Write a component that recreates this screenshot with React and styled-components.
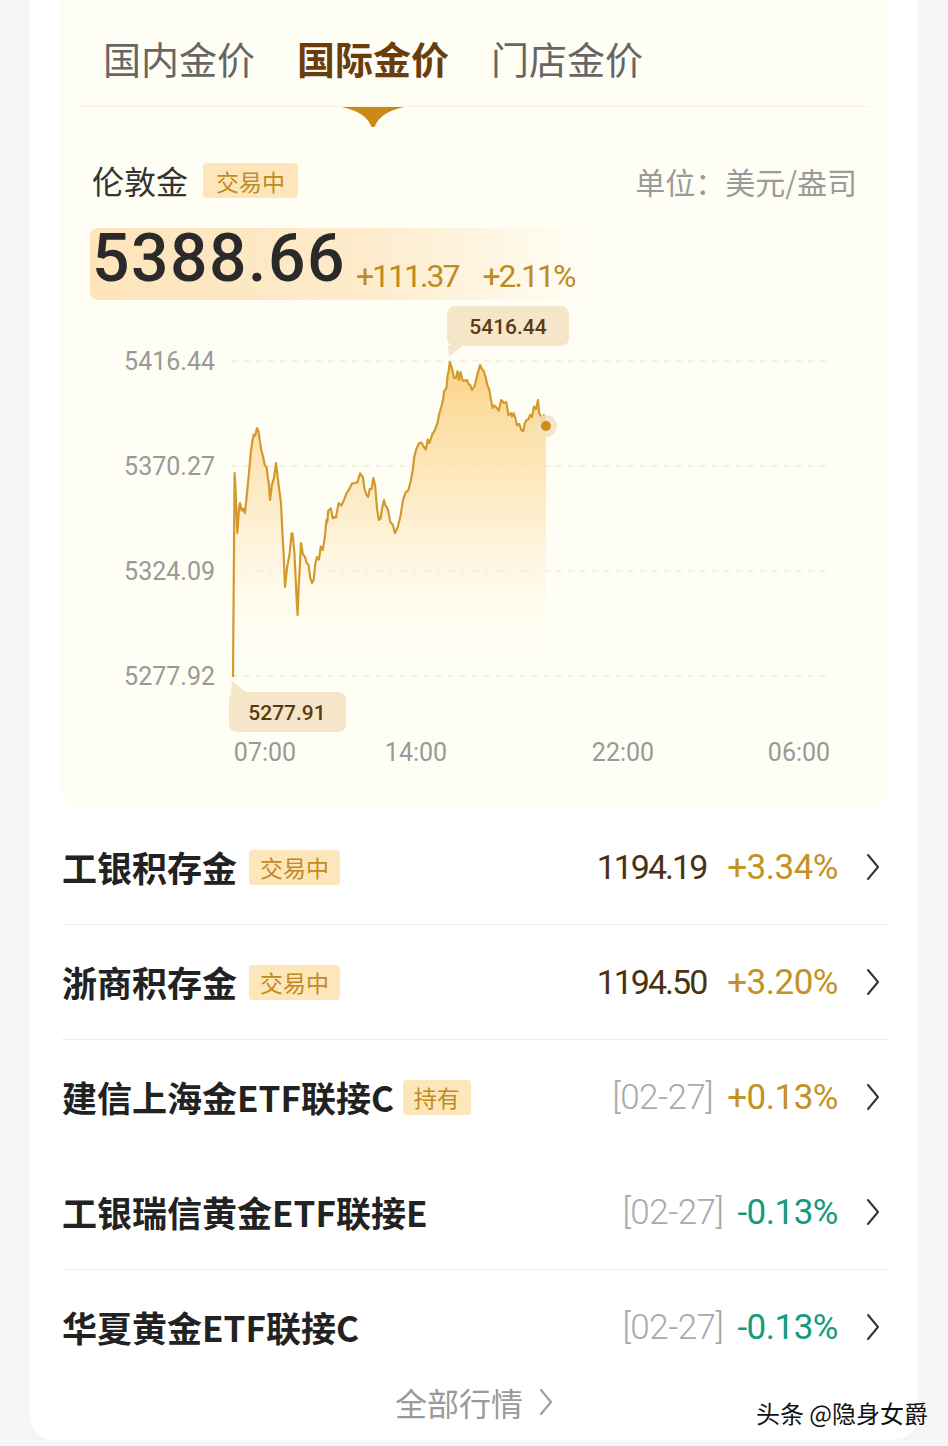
import React from 'react'
import styled, { createGlobalStyle } from 'styled-components'

const GlobalStyle = createGlobalStyle`
  html, body {
    margin: 0;
    padding: 0;
    background: #f5f5f5;
  }
  body {
    font-family: "Noto Sans CJK SC", "Noto Sans", sans-serif;
  }
`

const Page = styled.div`
  position: relative;
  width: 948px;
  height: 1446px;
  padding: 0 30px;
  box-sizing: border-box;
  background: #f5f5f5;
  overflow: hidden;
`

const Card = styled.div`
  height: 1440px;
  background: #ffffff;
  border-radius: 0 0 24px 24px;
  padding: 0 30px;
  box-sizing: border-box;
  display: flex;
  flex-direction: column;
`

const Panel = styled.div`
  height: 810px;
  background: #fffef4;
  border-radius: 0 0 24px 24px;
  display: flex;
  flex-direction: column;
  flex-shrink: 0;
`

const TabBar = styled.div`
  height: 107px;
  margin: 0 18px 0 20px;
  padding: 10px 0 0 23px;
  box-sizing: border-box;
  border-bottom: 1px solid #f7f1e1;
  display: flex;
  align-items: center;
  gap: 42px;
`

const Tab = styled.div`
  position: relative;
  font-size: 38px;
  line-height: 38px;
  color: ${p => (p.$active ? '#6a3d0c' : '#666666')};
  font-weight: ${p => (p.$active ? 700 : 400)};
`

const Indicator = styled.svg`
  position: absolute;
  left: 50%;
  top: calc(100% + 30px);
  transform: translateX(-50%);
`

const InfoRow = styled.div`
  margin-top: 56px;
  height: 35px;
  padding: 0 31px 0 32px;
  display: flex;
  align-items: center;
`

const Title = styled.div`
  font-size: 32px;
  line-height: 35px;
  color: #333333;
`

const Badge = styled.span`
  margin-left: ${p => p.$gap || 14}px;
  height: 35px;
  padding: 0 ${p => p.$pad || 11}px;
  border-radius: 4px;
  background: #fde6b9;
  color: #c18a22;
  font-size: 23px;
  font-weight: 400;
  display: inline-flex;
  align-items: center;
`

const Unit = styled.div`
  margin-left: auto;
  font-size: 30px;
  color: #9a9a9a;
`

const PriceBox = styled.div`
  margin: 30px 0 0 30px;
  width: 495px;
  height: 72px;
  padding-left: 2px;
  border-radius: 8px;
  background: linear-gradient(90deg, #fde4ba 0%, #fdebcc 55%, rgba(255, 250, 236, 0) 100%);
  display: flex;
  align-items: flex-end;
  font-family: Roboto, "Liberation Sans", sans-serif;
`

const BigPrice = styled.span`
  margin-bottom: 8px;
  font-size: 66px;
  line-height: 66px;
  font-weight: 500;
  letter-spacing: 1.5px;
  color: #2a2a2a;
`

const Delta = styled.span`
  margin: 0 0 8px ${p => p.$gap}px;
  font-size: 32px;
  line-height: 32px;
  letter-spacing: -2px;
  color: #c08b1f;
`

const ChartBox = styled.div`
  margin-top: 6px;
  height: 470px;
`

const List = styled.div`
  margin-left: 2px;
  display: flex;
  flex-direction: column;
`

const Row = styled.div`
  height: 115px;
  box-sizing: border-box;
  border-bottom: 1px solid ${p => (p.$divider ? '#eeeeee' : 'transparent')};
  display: flex;
  align-items: center;
`

const Name = styled.div`
  font-size: 35px;
  font-weight: 700;
  color: #222222;
  line-height: 40px;
`

const Right = styled.div`
  margin-left: auto;
  display: flex;
  align-items: center;
  font-family: Roboto, "Liberation Sans", sans-serif;
  font-size: 35px;
`

const Price = styled.span`
  font-size: 34px;
  letter-spacing: -2px;
  color: #4b3211;
`

const DateTag = styled.span`
  letter-spacing: -0.5px;
  color: #aaaaaa;
  font-weight: 300;
`

const Change = styled.span`
  margin-left: ${p => p.$gap}px;
  letter-spacing: -0.5px;
  color: ${p => (p.$down ? '#169a7c' : '#c39224')};
`

const ChevronSlot = styled.span`
  display: flex;
  margin: 0 8px 0 28px;
`

const More = styled.div`
  height: 34px;
  display: flex;
  justify-content: center;
  align-items: center;
  gap: 16px;
  font-size: 32px;
  color: #9a9a9a;
`

const Watermark = styled.div`
  position: absolute;
  right: 20px;
  bottom: 16px;
  font-size: 24px;
  color: #111111;
  text-shadow: 0 0 2px #fff, 0 0 2px #fff;
`

const keys = [
  [233, 677], [234.6, 473], [237.3, 533], [240, 503], [245, 513], [248, 483], [252, 443],
  [257, 428], [261.3, 450], [266.6, 467], [270, 500], [276, 463], [281, 503], [285, 587],
  [291.7, 533], [294.4, 553], [297.6, 615], [301, 543], [306.7, 563], [312, 583], [317, 557],
  [322.7, 550], [326.5, 520], [329, 510], [334.5, 517], [338.7, 503], [346.7, 493], [354.7, 483],
  [362.8, 477], [368, 497], [373.4, 478], [378.8, 520], [384, 500], [388, 510], [395, 533],
  [403, 500], [411, 480], [416, 450], [424, 447], [429.5, 443], [437.5, 423], [443, 400],
  [446.6, 387], [449.8, 362], [456, 378], [460.5, 372], [467, 380], [472, 390], [480, 365],
  [485.6, 377], [491, 400], [496, 407], [504, 403], [510.7, 413], [515, 417], [521.4, 430],
  [526.7, 420], [532, 417], [538, 400], [541.6, 427], [543.8, 415], [546, 425]
]

const buildPoints = () => {
  let seed = 11
  const rnd = () => {
    seed = (seed * 16807) % 2147483647
    return seed / 2147483647
  }
  const pts = [keys[0], keys[1]]
  for (let i = 1; i < keys.length - 1; i++) {
    const [x0, y0] = keys[i]
    const [x1, y1] = keys[i + 1]
    for (let s = 1; s <= 2; s++) {
      const t = s / 3
      const y = y0 + (y1 - y0) * t + (rnd() - 0.5) * 12
      pts.push([x0 + (x1 - x0) * t, Math.min(676, Math.max(364, y))])
    }
    pts.push(keys[i + 1])
  }
  return pts
}

const points = buildPoints()
const linePath = points.map(([x, y], i) => `${i ? 'L' : 'M'}${x.toFixed(1)},${y.toFixed(1)}`).join(' ')
const areaPath = `${linePath} L546,680 L233,680 Z`

const gridLines = [
  { y: 361, label: '5416.44' },
  { y: 466, label: '5370.27' },
  { y: 571, label: '5324.09' },
  { y: 676, label: '5277.92' }
]

const timeLabels = [
  { x: 265, label: '07:00' },
  { x: 416, label: '14:00' },
  { x: 623, label: '22:00' },
  { x: 799, label: '06:00' }
]

const Chart = () => (
  <svg width="828" height="470" viewBox="60 306 828 470">
    <defs>
      <linearGradient id="area" gradientUnits="userSpaceOnUse" x1="0" y1="380" x2="0" y2="650">
        <stop offset="0" stopColor="#fbcf7c" stopOpacity="0.85" />
        <stop offset="0.5" stopColor="#fde3b4" stopOpacity="0.6" />
        <stop offset="1" stopColor="#fff6e2" stopOpacity="0" />
      </linearGradient>
    </defs>
    {gridLines.map(g => (
      <g key={g.y}>
        <line x1="232" x2="830" y1={g.y} y2={g.y} stroke="#ece6d4" strokeWidth="1.2" strokeDasharray="6 6" />
        <text x="215" y={g.y + 9} textAnchor="end" fontFamily="Roboto, sans-serif" fontSize="25" fill="#999999">
          {g.label}
        </text>
      </g>
    ))}
    {timeLabels.map(t => (
      <text key={t.label} x={t.x} y="761" textAnchor="middle" fontFamily="Roboto, sans-serif" fontSize="25" fill="#999999">
        {t.label}
      </text>
    ))}
    <path d={areaPath} fill="url(#area)" />
    <path d={linePath} fill="none" stroke="#d29a2e" strokeWidth="2.2" strokeLinejoin="round" />
    <circle cx="546" cy="426" r="11" fill="#f1e2c2" opacity="0.85" />
    <circle cx="546" cy="426" r="5" fill="#cf8c17" />

    <polygon points="448,345 463,345 449,357" fill="#f6e6c9" />
    <rect x="447" y="306" width="122" height="40" rx="8" fill="#f6e6c9" />
    <text x="508" y="334" textAnchor="middle" fontFamily="Roboto, sans-serif" fontSize="21" fontWeight="500" fill="#5a3a10">
      5416.44
    </text>

    <polygon points="231,693 247,693 232,681" fill="#f6e6c9" />
    <rect x="229" y="692" width="117" height="40" rx="8" fill="#f6e6c9" />
    <text x="287" y="720" textAnchor="middle" fontFamily="Roboto, sans-serif" fontSize="21" fontWeight="500" fill="#5a3a10">
      5277.91
    </text>
  </svg>
)

const ChevronIcon = ({ color = '#333333' }) => (
  <svg width="14" height="28" viewBox="0 0 14 28">
    <polyline points="2,2 12,14 2,26" fill="none" stroke={color} strokeWidth="2" strokeLinecap="round" strokeLinejoin="round" />
  </svg>
)

const rows = [
  { name: '工银积存金', badge: '交易中', price: '1194.19', change: '+3.34%', divider: true },
  { name: '浙商积存金', badge: '交易中', price: '1194.50', change: '+3.20%', divider: true },
  { name: '建信上海金ETF联接C', badge: '持有', date: '[02-27]', change: '+0.13%' },
  { name: '工银瑞信黄金ETF联接E', date: '[02-27]', change: '-0.13%', down: true, divider: true },
  { name: '华夏黄金ETF联接C', date: '[02-27]', change: '-0.13%', down: true }
]

export default function App() {
  return (
    <>
      <GlobalStyle />
      <Page>
        <Card>
          <Panel>
            <TabBar>
              <Tab>国内金价</Tab>
              <Tab $active>
                国际金价
                <Indicator width="62" height="21" viewBox="0 0 62 21">
                  <path d="M0 0 L62 0 Q38 5 32.5 20 L29.5 20 Q24 5 0 0 Z" fill="#c98a1a" />
                </Indicator>
              </Tab>
              <Tab>门店金价</Tab>
            </TabBar>
            <InfoRow>
              <Title>伦敦金</Title>
              <Badge $gap={15} $pad={13}>交易中</Badge>
              <Unit>单位：美元/盎司</Unit>
            </InfoRow>
            <PriceBox>
              <BigPrice>5388.66</BigPrice>
              <Delta $gap={10}>+111.37</Delta>
              <Delta $gap={24}>+2.11%</Delta>
            </PriceBox>
            <ChartBox>
              <Chart />
            </ChartBox>
          </Panel>
          <List>
            {rows.map(r => (
              <Row key={r.name} $divider={r.divider}>
                <Name>{r.name}</Name>
                {r.badge && <Badge $gap={r.badge === '持有' ? 9 : 12}>{r.badge}</Badge>}
                <Right>
                  {r.price ? <Price>{r.price}</Price> : <DateTag>{r.date}</DateTag>}
                  <Change $gap={r.price ? 21 : 14} $down={r.down}>{r.change}</Change>
                  <ChevronSlot>
                    <ChevronIcon />
                  </ChevronSlot>
                </Right>
              </Row>
            ))}
          </List>
          <More>
            全部行情
            <ChevronIcon color="#9a9a9a" />
          </More>
        </Card>
        <Watermark>头条 @隐身女爵</Watermark>
      </Page>
    </>
  )
}
